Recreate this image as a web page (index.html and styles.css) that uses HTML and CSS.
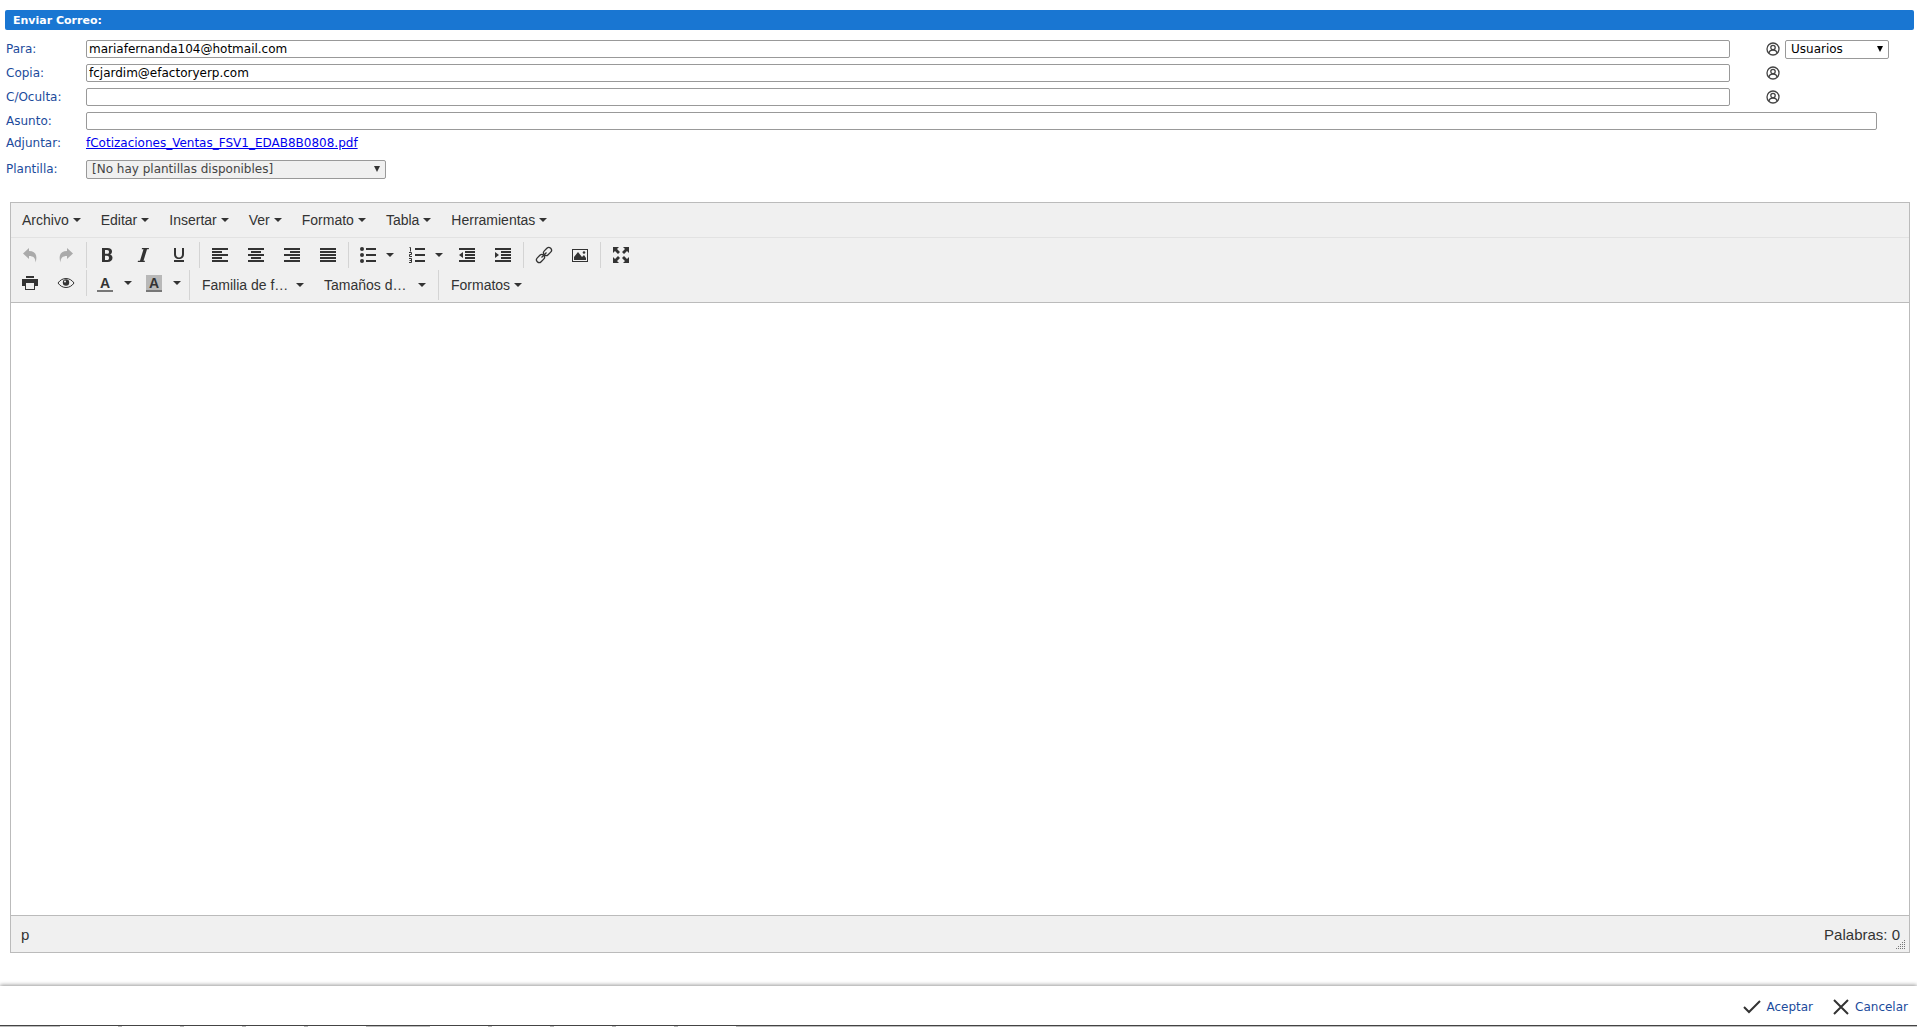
FILE: index.html
```html
<!DOCTYPE html>
<html lang="es">
<head>
<meta charset="utf-8">
<title>Enviar Correo</title>
<link rel="stylesheet" href="styles.css">
</head>
<body>
<svg class="defs" aria-hidden="true">
  <symbol id="user" viewBox="0 0 14 14"><g fill="none" stroke="#444" stroke-width="1.300"><circle cx="7" cy="7" r="6"/><circle cx="7" cy="5.500" r="2.200"/><path d="M3 11c.3-2 1.700-3 4-3s3.700 1 4 3"/></g></symbol>
</svg>
<main class="page">
  <h1 class="title">Enviar Correo:</h1>
  <form class="mail">
    <div class="row">
      <label for="para">Para:</label>
      <input class="field" id="para" type="text" value="mariafernanda104@hotmail.com">
      <div class="extra">
        <button class="pick" type="button" aria-label="Buscar destinatario"><svg><use href="#user"/></svg></button>
        <span class="drop users"><select aria-label="Origen"><option>Usuarios</option></select></span>
      </div>
    </div>
    <div class="row">
      <label for="copia">Copia:</label>
      <input class="field" id="copia" type="text" value="fcjardim@efactoryerp.com">
      <div class="extra"><button class="pick" type="button" aria-label="Buscar copia"><svg><use href="#user"/></svg></button></div>
    </div>
    <div class="row">
      <label for="oculta">C/Oculta:</label>
      <input class="field" id="oculta" type="text">
      <div class="extra"><button class="pick" type="button" aria-label="Buscar copia oculta"><svg><use href="#user"/></svg></button></div>
    </div>
    <div class="row subject">
      <label for="asunto">Asunto:</label>
      <input class="field" id="asunto" type="text">
    </div>
    <div class="row attach">
      <span class="label">Adjuntar:</span>
      <a href="#adjunto">fCotizaciones_Ventas_FSV1_EDAB8B0808.pdf</a>
    </div>
    <div class="row template">
      <label for="plantilla">Plantilla:</label>
      <span class="drop templates"><select id="plantilla" disabled><option>[No hay plantillas disponibles]</option></select></span>
    </div>
  </form>

  <section class="editor">
    <nav class="menubar">
      <button class="caret">Archivo</button>
      <button class="caret">Editar</button>
      <button class="caret">Insertar</button>
      <button class="caret">Ver</button>
      <button class="caret">Formato</button>
      <button class="caret">Tabla</button>
      <button class="caret">Herramientas</button>
    </nav>
    <div class="toolbar">
      <div class="tools">
        <div class="group">
          <button class="tool off" aria-label="Deshacer"><svg viewBox="0 0 18 18"><path d="M8 2v3c6 0 9 4 6.500 11.500C14.500 12 12.500 10 8 10v3L2 7.500z"/></svg></button>
          <button class="tool off" aria-label="Rehacer"><svg viewBox="0 0 18 18"><path d="M10 2v3c-6 0-9 4-6.500 11.500C3.500 12 5.500 10 10 10v3l6-5.500z"/></svg></button>
        </div>
        <div class="group">
          <button class="tool" aria-label="Negrita"><svg viewBox="0 0 18 18"><path fill-rule="evenodd" d="M4 2h5.500c3 0 4.500 1.300 4.500 3.500 0 1.500-.8 2.600-2 3 1.700.4 2.500 1.700 2.500 3.300 0 2.700-1.800 4.200-5 4.200H4zm3 2v3.800h2c1.400 0 2-.7 2-1.900S10.400 4 9 4zm0 5.800V14h2c1.300 0 2-.8 2-2.100s-.7-2.100-2-2.100z"/></svg></button>
          <button class="tool" aria-label="Cursiva"><svg viewBox="0 0 18 18"><path d="M8 2h7l-.3 1.200h-1.700L9.500 14.800h1.500l-.3 1.200h-7l.3-1.200h2L9.500 3.200H7.700z"/></svg></button>
          <button class="tool" aria-label="Subrayado"><svg viewBox="0 0 18 18"><path d="M4 2h2v6c0 2.300 1 3.500 3 3.500s3-1.200 3-3.500V2h2v6c0 3.500-1.800 5-5 5s-5-1.500-5-5zM4 14h10v2H4z"/></svg></button>
        </div>
        <div class="group">
          <button class="tool" aria-label="Izquierda"><svg viewBox="0 0 18 18"><path d="M1 2h16v2H1zm0 3h10v2H1zm0 3h16v2H1zm0 3h10v2H1zm0 3h16v2H1z"/></svg></button>
          <button class="tool" aria-label="Centro"><svg viewBox="0 0 18 18"><path d="M1 2h16v2H1zm3 3h10v2H4zM1 8h16v2H1zm3 3h10v2H4zm-3 3h16v2H1z"/></svg></button>
          <button class="tool" aria-label="Derecha"><svg viewBox="0 0 18 18"><path d="M1 2h16v2H1zm6 3h10v2H7zM1 8h16v2H1zm6 3h10v2H7zm-6 3h16v2H1z"/></svg></button>
          <button class="tool" aria-label="Justificar"><svg viewBox="0 0 18 18"><path d="M1 2h16v2H1zm0 3h16v2H1zm0 3h16v2H1zm0 3h16v2H1zm0 3h16v2H1z"/></svg></button>
        </div>
        <div class="group">
          <button class="tool split caret" aria-label="Lista"><svg viewBox="0 0 18 18"><path d="M7 2h10v2H7zm0 6h10v2H7zm0 6h10v2H7z"/><circle cx="3" cy="3" r="2"/><circle cx="3" cy="9" r="2"/><circle cx="3" cy="15" r="2"/></svg></button>
          <button class="tool split caret" aria-label="Lista numerada"><svg viewBox="0 0 18 18"><path d="M7 2h10v2H7zm0 6h10v2H7zm0 6h10v2H7z"/><path fill="none" stroke="#333" d="M1.500 1.500h1v4M1 6.500h2.500v2h-2v2H4M1 12.500h2.500v4H1m.5-2h2"/></svg></button>
          <button class="tool" aria-label="Reducir sangría"><svg viewBox="0 0 18 18"><path d="M1 2h16v2H1zm6 3h10v2H7zm0 3h10v2H7zm0 3h10v2H7zm-6 3h16v2H1zM5 6v6L1 9z"/></svg></button>
          <button class="tool" aria-label="Aumentar sangría"><svg viewBox="0 0 18 18"><path d="M1 2h16v2H1zm6 3h10v2H7zm0 3h10v2H7zm0 3h10v2H7zm-6 3h16v2H1zM1 6v6l4-3z"/></svg></button>
        </div>
        <div class="group">
          <button class="tool" aria-label="Enlace"><svg viewBox="0 0 18 18"><g fill="none" stroke="#333" stroke-width="1.300"><rect x="-4.500" y="-2.700" width="9" height="5.400" rx="2.700" transform="translate(12.500 5.500) rotate(-45)"/><rect x="-4.500" y="-2.700" width="9" height="5.400" rx="2.700" transform="translate(5.500 12.500) rotate(-45)"/><path d="M6.500 11.500l5-5"/></g></svg></button>
          <button class="tool" aria-label="Imagen"><svg viewBox="0 0 18 18"><path fill-rule="evenodd" d="M1 3h16v13H1zm1 1v11h14V4z"/><path d="M3 14v-3l4-5 4 5 2-2 2 3v2z"/><circle cx="13" cy="6.500" r="1.300"/></svg></button>
        </div>
        <div class="group">
          <button class="tool" aria-label="Pantalla completa"><svg viewBox="0 0 18 18"><path d="M1 1h6L5 3l3 3-2 2-3-3-2 2zm16 0h-6l2 2-3 3 2 2 3-3 2 2zM1 17h6l-2-2 3-3-2-2-3 3-2-2zm16 0h-6l2-2-3-3 2-2 3 3 2-2z"/></svg></button>
        </div>
      </div>
      <div class="tools">
        <div class="group">
          <button class="tool" aria-label="Imprimir"><svg viewBox="0 0 18 18"><path d="M5 2h8v2H5z"/><path fill-rule="evenodd" d="M1 5h16v7h-3v4H4v-4H1zm4 4v6h8V9z"/></svg></button>
          <button class="tool" aria-label="Vista previa"><svg viewBox="0 0 18 18"><path fill="none" stroke="#333" d="M1 9c4-6 12-6 16 0-4 6-12 6-16 0z"/><circle cx="9" cy="8.500" r="3.200"/><circle cx="8" cy="7.500" r="1" fill="#f0f0f0"/></svg></button>
        </div>
        <div class="group">
          <button class="tool split caret" aria-label="Color de texto"><span class="ink">A</span></button>
          <button class="tool split caret" aria-label="Color de fondo"><span class="ink fill">A</span></button>
        </div>
        <div class="group tall">
          <button class="list caret"><span>Familia de f…</span></button>
          <button class="list caret"><span>Tamaños d…</span></button>
        </div>
        <div class="group tall">
          <button class="caret formats">Formatos</button>
        </div>
      </div>
    </div>
    <div class="canvas" contenteditable="true" role="textbox" aria-label="Mensaje"></div>
    <footer class="status">
      <span>p</span><span>Palabras: 0</span>
      <svg class="grip" viewBox="0 0 10 10"><path fill="none" stroke="#777" stroke-dasharray="1 1" d="M8 .5h2M6 2.500h4M4 4.500h6M2 6.500h8M0 8.500h10"/></svg>
    </footer>
  </section>
</main>
<div class="actions">
  <button><svg viewBox="0 0 18 18"><path d="M1 9l5 5L17 3"/></svg>Aceptar</button>
  <button><svg viewBox="0 0 18 18"><path d="M2 2l14 14M16 2L2 16"/></svg>Cancelar</button>
</div>
<div class="strip"><i></i><i></i><i></i><i></i><i></i><i class="apart"></i><i></i><i></i><i></i><i></i></div>
</body>
</html>
```
FILE: styles.css
```css
* { box-sizing: border-box; }
body {
  margin: 0;
  min-height: 100vh;
  display: flex;
  flex-direction: column;
  background: #fff;
  color: #333;
  font-family: "DejaVu Sans", Verdana, sans-serif;
  font-size: 12px;
}
button {
  margin: 0;
  padding: 0;
  border: 0;
  background: none;
  color: inherit;
  font: inherit;
  cursor: pointer;
}
.defs { position: absolute; width: 0; height: 0; }
.page {
  flex: 1;
  display: flex;
  flex-direction: column;
  padding: 10px 3px 33px 5px;
}
.title {
  margin: 0 0 10px;
  padding-left: 8px;
  height: 20px;
  line-height: 21px;
  border-radius: 2px;
  background: #1976d2;
  color: #fff;
  font-size: 11px;
}

.mail { padding: 0 25px 0 1px; margin-bottom: 23px; }
.row {
  display: flex;
  align-items: center;
  height: 18px;
  margin-bottom: 6px;
}
.row label, .label { width: 80px; flex: none; color: #1c4b9c; }
.field {
  flex: 1;
  min-width: 0;
  height: 18px;
  padding: 0 2px;
  border: 1px solid #999;
  border-radius: 2px;
  color: #000;
  font: 12px "DejaVu Sans", Verdana, sans-serif;
}
.extra {
  width: 159px;
  padding-left: 36px;
  display: flex;
  align-items: center;
  gap: 5px;
}
.subject { padding-right: 12px; }
.pick { width: 14px; height: 14px; }
.pick svg { display: block; width: 14px; height: 14px; }
.attach { height: 14px; }
.attach a { color: #00e; }
.template { height: 20px; margin: 9px 0 0; }
.drop { position: relative; flex: none; display: flex; }
.drop::after {
  content: "";
  position: absolute;
  right: 6px;
  top: 6px;
  border: 3px solid transparent;
  border-top: 6px solid #000;
  border-bottom: 0;
}
.drop select {
  appearance: none;
  width: 100%;
  height: 19px;
  padding: 0 5px;
  border: 1px solid #999;
  border-radius: 2px;
  background: #fff;
  color: #000;
  font: 12px "DejaVu Sans", Verdana, sans-serif;
}
.users { width: 104px; }
.templates { width: 300px; }
.templates select { background: #f0f0f0; color: #444; opacity: 1; }
.templates::after { border-top-color: #333; }

.editor {
  flex: 1;
  display: flex;
  flex-direction: column;
  margin: 0 4px 0 5px;
  border: 1px solid #bbb;
  font: 14px "Liberation Sans", Arial, sans-serif;
}
.menubar {
  display: flex;
  height: 35px;
  padding-left: 1px;
  background: #f0f0f0;
  border-bottom: 1px solid #e2e2e2;
}
.menubar button, .formats { padding: 0 10px; }
.caret { display: flex; align-items: center; gap: 4px; }
.caret::after {
  content: "";
  border: 4px solid transparent;
  border-top-color: #333;
  border-bottom: 0;
}
.toolbar {
  padding: 4px 1px 2px;
  background: #f0f0f0;
  border-bottom: 1px solid #bbb;
}
.tools { display: flex; align-items: flex-start; margin-bottom: 2px; }
.tools + .tools { margin-bottom: 0; }
.group { display: flex; height: 26px; padding-right: 2px; }
.group + .group { padding-left: 2px; border-left: 1px solid #d4d4d4; }
.tall { height: 30px; }
.tool {
  width: 36px;
  height: 26px;
  display: flex;
  align-items: center;
  justify-content: center;
}
.tool svg { width: 18px; height: 18px; fill: #333; }
.off svg { fill: #aaa; }
.split { width: 49px; justify-content: flex-start; padding-left: 8px; gap: 9px; }
.ink {
  width: 16px;
  height: 17px;
  margin-right: 2px;
  border-bottom: 2px solid #777;
  font-weight: bold;
  line-height: 16px;
}
.fill { background: #b8b8b8; }
.list { width: 122px; padding: 0 10px; justify-content: space-between; }
.canvas { flex: 1; min-height: 120px; background: #fff; outline: 0; }
.status {
  position: relative;
  display: flex;
  justify-content: space-between;
  align-items: center;
  height: 37px;
  padding: 0 9px 0 10px;
  background: #f0f0f0;
  border-top: 1px solid #bbb;
  font-size: 15px;
}
.grip { position: absolute; right: 3px; bottom: 2px; width: 10px; height: 10px; }

.actions {
  display: flex;
  justify-content: flex-end;
  align-items: center;
  gap: 19px;
  height: 39px;
  padding: 3px 9px 0 0;
  box-shadow: 0 -1px 4px #999;
  color: #1c4b9c;
}
.actions button { display: flex; align-items: center; gap: 5px; }
.actions svg { width: 18px; height: 18px; fill: none; stroke: #333; stroke-width: 2; }
.strip {
  display: flex;
  gap: 4px;
  height: 2px;
  padding-left: 60px;
  background: #bbb;
  border-top: 1px solid #444;
}
.strip i { width: 58px; height: 1px; background: #fff; }
.strip .apart { margin-left: 60px; }
```
